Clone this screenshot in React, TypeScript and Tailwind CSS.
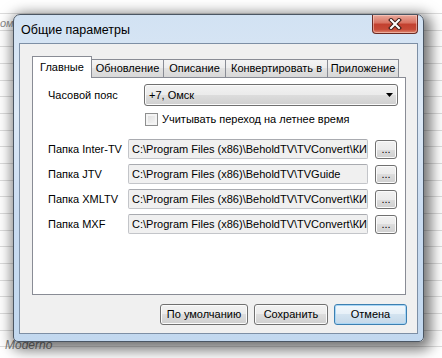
import clsx from "clsx";
import type { ReactNode } from "react";

const PATH_LONG = "C:\\Program Files (x86)\\BeholdTV\\TVConvert\\КИ";
const PATH_JTV = "C:\\Program Files (x86)\\BeholdTV\\TVGuide";

const folders = [
  { label: "Папка Inter-TV", value: PATH_LONG },
  { label: "Папка JTV", value: PATH_JTV },
  { label: "Папка XMLTV", value: PATH_LONG },
  { label: "Папка MXF", value: PATH_LONG },
];

const tabs = [
  { label: "Главные", width: "w-[60px]", active: true },
  { label: "Обновление", width: "w-[73px]" },
  { label: "Описание", width: "w-[63px]" },
  { label: "Конвертировать в", width: "w-[103px]" },
  { label: "Приложение", width: "w-[72px]" },
];

function WinButton({ children, focused, className }: { children: ReactNode; focused?: boolean; className?: string }) {
  return (
    <button
      type="button"
      className={clsx(
        "flex items-center justify-center rounded-[3px] border text-[11px] leading-none text-black",
        focused
          ? "border-[#3c7fb1] bg-[linear-gradient(180deg,#f1f7fc_0%,#e6f0f8_50%,#d3e3f0_50%,#c4d8e9_100%)] shadow-[inset_0_0_0_1px_#a9d6f5]"
          : "border-[#707070] bg-[linear-gradient(180deg,#f2f2f2_0%,#ebebeb_50%,#dddddd_50%,#cfcfcf_100%)] shadow-[inset_0_0_0_1px_#fbfbfb]",
        className
      )}
    >
      {children}
    </button>
  );
}

function CloseButton() {
  return (
    <div className="flex h-[19px] w-[46px] items-center justify-center rounded-b-[4px] border border-t-0 border-[#6b2b24] bg-[linear-gradient(180deg,#e9a99c_0%,#d8705f_45%,#c2402f_50%,#c74a37_80%,#df8a72_100%)] shadow-[inset_0_0_0_1px_rgba(255,220,210,0.5)]">
      <svg width="14" height="12" viewBox="0 0 14 12">
        <path d="M3 2 L11 10 M11 2 L3 10" stroke="#3a1a16" strokeWidth="4" strokeLinecap="square" />
        <path d="M3 2 L11 10 M11 2 L3 10" stroke="#ffffff" strokeWidth="2" strokeLinecap="square" />
      </svg>
    </div>
  );
}

export default function App() {
  return (
    <div className="relative h-[358px] w-[442px] overflow-hidden bg-white bg-[repeating-linear-gradient(180deg,transparent_0px,transparent_13px,#dcdcdc_13px,#dcdcdc_14px,transparent_14px,transparent_16.67px)] font-['Liberation_Sans',Arial,sans-serif]">
      <span className="absolute left-0 top-[15px] text-[11px] italic text-[#8a8a8a]">ом</span>
      <span className="absolute left-[5px] top-[336px] text-[12px] italic text-[#7a7a7a]">Moderno</span>

      <div className="absolute left-[13px] top-[14px] flex h-[328px] w-[411px] flex-col rounded-t-[7px] rounded-b-[5px] border border-[#4b5663] bg-[linear-gradient(180deg,#d2e2f3_0%,#dde9f6_30%,#cadcf1_60%,#c2d8ef_100%)] px-[5px] pb-[7px] shadow-[3px_4px_14px_4px_rgba(0,0,0,0.55)]">
        <div className="flex h-[28px] items-start justify-between pl-[2px] pr-0">
          <span className="pt-[7px] text-[12.5px] leading-[16px] text-black">Общие параметры</span>
          <CloseButton />
        </div>

        <div className="flex flex-1 flex-col border border-[#7d8fa5] bg-[#f0f0f0] pl-[12px] pt-[12px]">
          <div className="flex h-[21px] w-[374px] items-end">
            {tabs.map((tab) => (
              <div
                key={tab.label}
                className={clsx(
                  "flex items-center justify-center whitespace-nowrap border border-[#898c95] text-[11px] text-black",
                  tab.width,
                  tab.active
                    ? "relative z-10 -mb-px h-[22px] border-b-0 bg-white pb-[1px]"
                    : "-ml-px h-[18px] border-b-0 bg-[linear-gradient(180deg,#f4f4f4_0%,#ececec_50%,#e2e2e2_50%,#d8d8d8_100%)]"
                )}
              >
                {tab.label}
              </div>
            ))}
          </div>

          <div className="flex h-[218px] w-[374px] flex-col border border-[#898c95] bg-white pl-[15px] pt-[6px] text-[11px] text-black">
            <div className="flex h-[22px] items-center">
              <span className="w-[96px]">Часовой пояс</span>
              <div className="flex h-[22px] w-[254px] items-center justify-between rounded-[3px] border border-[#707070] bg-[linear-gradient(180deg,#f2f2f2_0%,#ebebeb_50%,#dddddd_50%,#cfcfcf_100%)] pl-[4px] pr-[4px] shadow-[inset_0_0_0_1px_#fbfbfb]">
                <span>+7, Омск</span>
                <svg width="7" height="4" viewBox="0 0 7 4">
                  <path d="M0 0 H7 L3.5 4 Z" fill="#000" />
                </svg>
              </div>
            </div>

            <div className="mt-[7px] flex h-[13px] items-center pl-[97px]">
              <span className="h-[13px] w-[13px] border border-[#8e8f8f] bg-[linear-gradient(135deg,#dcdcdc,#f8f8f8)] shadow-[inset_0_0_0_2px_#f4f4f4]" />
              <span className="ml-[4px]">Учитывать переход на летнее время</span>
            </div>

            <div className="mt-[13px] flex flex-col gap-[5px]">
              {folders.map((folder) => (
                <div key={folder.label} className="flex h-[20px] items-center">
                  <span className="w-[80px] whitespace-nowrap">{folder.label}</span>
                  <div className="flex h-[20px] w-[240px] items-center overflow-hidden whitespace-nowrap rounded-[2px] border border-[#c3c5c9] border-t-[#a9abb0] bg-[#f0f0f0] pl-[3px]">
                    {folder.value}
                  </div>
                  <WinButton className="ml-[7px] h-[19px] w-[22px] items-end pb-[3px]">...</WinButton>
                </div>
              ))}
            </div>
          </div>

          <div className="mt-[9px] flex w-[375px] justify-end gap-[6px]">
            <WinButton className="h-[21px] w-[88px]">По умолчанию</WinButton>
            <WinButton className="h-[21px] w-[74px]">Сохранить</WinButton>
            <WinButton focused className="h-[21px] w-[73px]">Отмена</WinButton>
          </div>
        </div>
      </div>
    </div>
  );
}
